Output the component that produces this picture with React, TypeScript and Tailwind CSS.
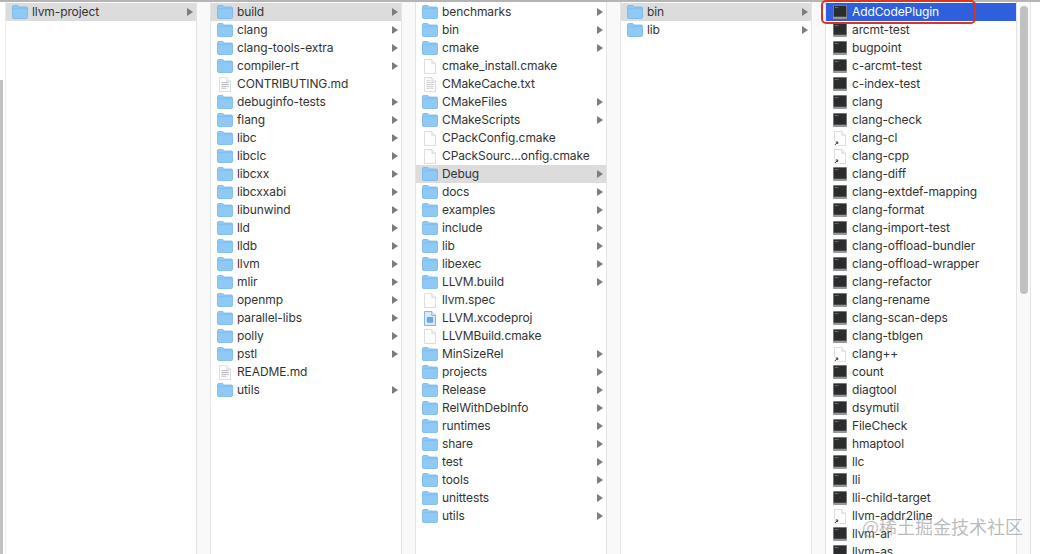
type Kind = "folder" | "doc" | "text" | "plain" | "xcode" | "exec" | "alias"
type Row = [string, Kind]

const d = (name: string): Row => [name, "folder"]
const x = (name: string): Row => [name, "exec"]
const a = (name: string): Row => [name, "alias"]

const col2: Row[] = [
  d("build"), d("clang"), d("clang-tools-extra"), d("compiler-rt"), ["CONTRIBUTING.md", "doc"],
  d("debuginfo-tests"), d("flang"), d("libc"), d("libclc"), d("libcxx"), d("libcxxabi"), d("libunwind"),
  d("lld"), d("lldb"), d("llvm"), d("mlir"), d("openmp"), d("parallel-libs"), d("polly"), d("pstl"),
  ["README.md", "doc"], d("utils"),
]

const col3: Row[] = [
  d("benchmarks"), d("bin"), d("cmake"), ["cmake_install.cmake", "plain"], ["CMakeCache.txt", "text"],
  d("CMakeFiles"), d("CMakeScripts"), ["CPackConfig.cmake", "plain"], ["CPackSourc...onfig.cmake", "plain"],
  d("Debug"), d("docs"), d("examples"), d("include"), d("lib"), d("libexec"), d("LLVM.build"),
  ["llvm.spec", "plain"], ["LLVM.xcodeproj", "xcode"], ["LLVMBuild.cmake", "plain"], d("MinSizeRel"),
  d("projects"), d("Release"), d("RelWithDebInfo"), d("runtimes"), d("share"), d("test"), d("tools"),
  d("unittests"), d("utils"),
]

const col5: Row[] = [
  x("AddCodePlugin"), x("arcmt-test"), x("bugpoint"), x("c-arcmt-test"), x("c-index-test"), x("clang"),
  x("clang-check"), a("clang-cl"), a("clang-cpp"), x("clang-diff"), x("clang-extdef-mapping"), x("clang-format"),
  x("clang-import-test"), x("clang-offload-bundler"), x("clang-offload-wrapper"), x("clang-refactor"),
  x("clang-rename"), x("clang-scan-deps"), x("clang-tblgen"), a("clang++"), x("count"), x("diagtool"),
  x("dsymutil"), x("FileCheck"), x("hmaptool"), x("llc"), x("lli"), x("lli-child-target"), a("llvm-addr2line"),
  x("llvm-ar"), x("llvm-as"),
]

function FileIcon({ kind }: { kind: Kind }) {
  if (kind === "folder") {
    return (
      <svg width="16" height="14" viewBox="0 0 16 14" className="shrink-0">
        <path d="M0.5 3V1.6C0.5 1 1 .5 1.6 .5H5.4C6 .5 6.3 .8 6.7 1.3L7.2 2H14.4C15 2 15.5 2.5 15.5 3.1V12.4C15.5 13 15 13.5 14.4 13.5H1.6C1 13.5 .5 13 .5 12.4Z" fill="#8fcaf5" stroke="#6cb0e6" strokeWidth="0.7" />
        <path d="M0.8 3.6H15.2" stroke="#78bbee" strokeWidth="0.7" />
      </svg>
    )
  }
  if (kind === "exec") {
    return (
      <svg width="14" height="14" viewBox="0 0 14 14" className="shrink-0">
        <rect x="0" y="0" width="14" height="14" rx="0.8" fill="#979797" />
        <rect x="0.7" y="0.7" width="12.6" height="11" fill="#2a2c2d" />
        <path d="M2 2.6H5.5" stroke="#a9b8b0" strokeWidth="0.8" strokeDasharray="0.8 0.5" />
      </svg>
    )
  }
  return (
    <svg width="12" height="15" viewBox="0 0 13 16" className="shrink-0">
      <path d="M.5 .5H8.5L12.5 4.5V15.5H.5Z" fill={kind === "xcode" ? "#dcebfb" : "#ffffff"} stroke={kind === "xcode" ? "#5a9be0" : "#cfcfcf"} strokeWidth="0.8" />
      <path d="M8.5 .5V4.5H12.5" fill="#f2f2f2" stroke={kind === "xcode" ? "#5a9be0" : "#cfcfcf"} strokeWidth="0.8" />
      {kind === "doc" && (
        <path d="M2.5 6H10.5M2.5 8H10.5M2.5 10H10.5M2.5 12H8" stroke="#9aa4b4" strokeWidth="0.8" />
      )}
      {kind === "text" && (
        <path d="M2.5 4H7M2.5 6H10.5M2.5 8H10.5M2.5 10H10.5M2.5 12H10.5" stroke="#c4c4c4" strokeWidth="0.9" />
      )}
      {kind === "xcode" && <rect x="3" y="6.5" width="7" height="6" rx="1" fill="#6ea6e6" />}
      {kind === "alias" && (
        <>
          <rect x="0" y="10.5" width="5" height="5" fill="#fff" />
          <path d="M1 15L3.6 12.4M1.8 11.8H4V14" stroke="#222" strokeWidth="1" fill="none" />
        </>
      )}
    </svg>
  )
}

function ColumnRow({ row, open, active }: { row: Row; open?: boolean; active?: boolean }) {
  const [name, kind] = row
  const bg = active ? "bg-[#2f5fdc] text-white" : open ? "bg-[#dcdcdc] text-[#333]" : "text-[#333]"
  return (
    <div className={`flex h-[18px] items-center ${bg}`}>
      <div className="flex w-[26px] shrink-0 justify-center pl-px">
        <FileIcon kind={kind} />
      </div>
      <span className="flex-1 truncate leading-[18px] tracking-[-0.1px]">{name}</span>
      {kind === "folder" && (
        <svg width="6" height="8" viewBox="0 0 6 8" className="mr-[3px] shrink-0">
          <path d="M0 0L6 4L0 8Z" fill="#7d7d7d" />
        </svg>
      )}
    </div>
  )
}

function Column({ rows, openName, activeName }: { rows: Row[]; openName?: string; activeName?: string }) {
  return (
    <div className="w-[191px] shrink-0 border-r border-[#e4e4e4] bg-white pt-px">
      {rows.map(row => (
        <ColumnRow key={row[0]} row={row} open={row[0] === openName} active={row[0] === activeName} />
      ))}
    </div>
  )
}

function Gutter() {
  return <div className="w-[14px] shrink-0 border-r border-[#e4e4e4] bg-[#f9f9f9]" />
}

export default function App() {
  return (
    <div className="relative flex h-[554px] w-[1040px] flex-col overflow-hidden bg-white font-['Inter',sans-serif] text-[12px]">
      <div className="h-[2px] shrink-0 bg-[#b5b5b5]" />
      <div className="flex min-h-0 flex-1 items-stretch">
        <div className="flex w-[6px] shrink-0 flex-col border-r border-[#ececec]">
          <div className="h-[78px] shrink-0" />
          <div className="w-[3px] flex-1 bg-[#c2c2c2]" />
        </div>
        <Column rows={[d("llvm-project")]} openName="llvm-project" />
        <Gutter />
        <Column rows={col2} openName="build" />
        <Gutter />
        <Column rows={col3} openName="Debug" />
        <Gutter />
        <Column rows={[d("bin"), d("lib")]} openName="bin" />
        <Gutter />
        <Column rows={col5} activeName="AddCodePlugin" />
        <div className="relative w-[14px] shrink-0 border-r border-[#e4e4e4] bg-[#f9f9f9] pl-[3px] pt-[4px]">
          <div className="h-[288px] w-[8px] rounded-full bg-[#c1c1c1]" />
        </div>
        <div className="flex-1 bg-white" />
      </div>
      <div className="absolute left-[821px] top-0 h-[24px] w-[155px] rounded-[5px] border-[2.5px] border-[#dd3322]" />
      <div className="absolute left-[862px] top-[513px] text-[18px] text-[#8e8e8e]/60 font-['Noto_Sans_CJK_SC','Liberation_Sans',sans-serif]">
        @稀土掘金技术社区
      </div>
    </div>
  )
}
